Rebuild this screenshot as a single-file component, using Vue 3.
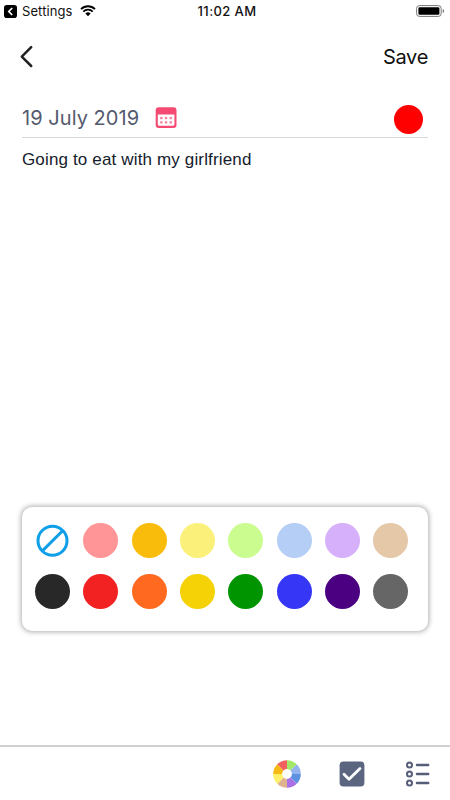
<template>
  <div class="screen">
    <div class="status-bar">
      <div class="status-left">
        <svg width="13" height="13" viewBox="0 0 13 13">
          <rect width="13" height="13" rx="2.8" fill="#000" />
          <path d="M8.2 3 4.8 6.5 8.2 10" fill="none" stroke="#fff" stroke-width="1.7" />
        </svg>
        <span class="settings">Settings</span>
        <svg class="wifi" width="16" height="12" viewBox="0 0 16 12">
          <path d="M1 4.1a10 10 0 0 1 14 0M3.3 6.6a6.7 6.7 0 0 1 9.4 0" fill="none" stroke="#000" stroke-width="1.9" />
          <path d="M8 11.2 5.3 8.6a3.9 3.9 0 0 1 5.4 0z" fill="#000" />
        </svg>
      </div>
      <span class="time">11:02 AM</span>
      <svg class="battery" width="29" height="12" viewBox="0 0 29 12">
        <rect x=".6" y=".6" width="24.6" height="10.8" rx="2.8" fill="#fff" stroke="#777" />
        <rect x="2.4" y="2.2" width="21" height="7.6" rx="1.2" fill="#000" />
        <path d="M26.8 4v4q1.3-.6 1.3-2t-1.3-2z" fill="#666" />
      </svg>
    </div>

    <header class="nav">
      <button class="back" aria-label="Back">
        <svg width="14" height="24" viewBox="0 0 14 24">
          <path d="M11.2 2.2 1.8 11.6l9.4 9.4" fill="none" stroke="#222" stroke-width="2.5" stroke-linecap="round" stroke-linejoin="round" />
        </svg>
      </button>
      <button class="save">Save</button>
    </header>

    <main class="note">
      <div class="date-row">
        <span class="date">{{ date }}</span>
        <svg width="22" height="22" viewBox="0 0 22 22">
          <rect x=".7" y=".2" width="20.8" height="20.8" rx="3" fill="#f54a72" />
          <path d="M2.8 7.4h16.6v9.8q0 1.6-1.6 1.6H4.4q-1.6 0-1.6-1.6z" fill="#fff" />
          <g fill="#f4819c">
            <template v-for="y in [9.9, 14.2]" :key="y">
              <rect v-for="x in [5.2, 9.9, 14.6]" :key="x" :x="x" :y="y" width="2.3" height="2.3" />
            </template>
          </g>
        </svg>
        <span class="current"></span>
      </div>
      <p class="text">{{ text }}</p>
    </main>

    <div class="palette">
      <template v-for="color in colors" :key="color">
        <button v-if="color === 'none'" class="swatch" aria-label="No color">
          <svg width="35" height="35" viewBox="0 0 35 35">
            <g fill="none" stroke="#0f9fe8" stroke-width="3">
              <circle cx="17.5" cy="17.8" r="14.5" />
              <path d="M7.4 27.9 27.6 7.7" />
            </g>
          </svg>
        </button>
        <button v-else class="swatch" :style="{ background: color }"></button>
      </template>
    </div>

    <footer class="toolbar">
      <svg width="28" height="28" viewBox="-14 -14 28 28">
        <path
          v-for="(color, i) in wheel"
          :key="color"
          d="M0-4.9V-13.8A13.8 13.8 0 0 1 9.76-9.76L3.46-3.46A4.9 4.9 0 0 0 0-4.9z"
          :fill="color"
          :transform="`rotate(${i * 45})`"
        />
      </svg>
      <svg width="26" height="26" viewBox="0 0 26 26">
        <rect x=".6" y=".6" width="24.8" height="24.8" rx="3.6" fill="#5c6580" />
        <path d="m5 13.2 5 5L21 7.6" fill="none" stroke="#fff" stroke-width="2.8" stroke-linecap="round" stroke-linejoin="round" />
      </svg>
      <svg width="24" height="26" viewBox="0 0 24 26">
        <g v-for="y in [4, 13, 22]" :key="y" fill="none" stroke="#555d78">
          <circle cx="3.5" :cy="y" r="2.5" stroke-width="2" />
          <path :d="`M11 ${y}h11.2`" stroke-width="2.5" stroke-linecap="round" />
        </g>
      </svg>
    </footer>
  </div>
</template>

<script setup>
const date = '19 July 2019'
const text = 'Going to eat with my girlfriend'

const colors = [
  'none', '#ff9596', '#f9bc0b', '#fbf07a', '#cbfc8f', '#b4cef6', '#d7b0fb', '#e5c8a8',
  '#282828', '#f32222', '#ff6a20', '#f4d205', '#009400', '#3636f6', '#4a0080', '#666666'
]

// clockwise from the top
const wheel = ['#a3e869', '#92b3ee', '#5d92e0', '#aa70e6', '#dfb38d', '#fff067', '#f7b916', '#f26060']
</script>

<style>
body{background:#fff}
</style>

<style scoped>
.screen{width:450px;height:800px;display:flex;flex-direction:column;background:#fff;font-family:Inter,"Liberation Sans",sans-serif;overflow:hidden}
button{border:0;padding:0;background:none;font:inherit;color:inherit}
svg{display:block;flex:none}

.status-bar{height:23px;box-sizing:border-box;padding:0 5px 1px 4px;display:grid;grid-template-columns:1fr auto 1fr;align-items:center;color:#111}
.status-left{display:flex;align-items:center}
.settings{margin-left:5px;font-size:13px;line-height:22px;letter-spacing:.1px}
.wifi{margin-left:7px}
.time{margin-left:5px;font-size:13px;line-height:22px;font-weight:500;letter-spacing:.4px}
.battery{justify-self:end}

.nav{height:67px;box-sizing:border-box;padding:0 22px 0 20px;display:flex;align-items:center;justify-content:space-between}
.save{font-size:20px;letter-spacing:-.3px;color:#111}

.note{flex:1;padding:0 22px}
.date-row{height:48px;box-sizing:border-box;padding:8px 5px 0 0;border-bottom:1px solid #d8d8dc;display:flex;align-items:center}
.date{width:133px;font-size:20px;letter-spacing:.05px;color:#545a6e;white-space:nowrap}
.current{width:29px;height:29px;margin:3px 0 0 auto;border-radius:50%;background:#f00}
.text{margin:10px 0 0;font-family:"Liberation Sans",Arial,sans-serif;font-size:17px;line-height:24px;letter-spacing:.15px;color:#15202c}

.palette{height:124px;box-sizing:border-box;margin:0 22px 114px;padding:16px 19.5px 0 13px;display:grid;grid-template-columns:repeat(8,35px);justify-content:space-between;align-content:start;row-gap:16px;border-radius:10px;background:#fff;box-shadow:0 0 5px 1px rgba(0,0,0,.32)}
.swatch{width:35px;height:35px;border-radius:50%}

.toolbar{height:55px;box-sizing:border-box;padding:0 20px 0 0;border-top:2px solid #d0d0d0;display:flex;align-items:center;justify-content:flex-end;gap:38px}
.toolbar svg:last-child{margin-left:3px}
</style>
